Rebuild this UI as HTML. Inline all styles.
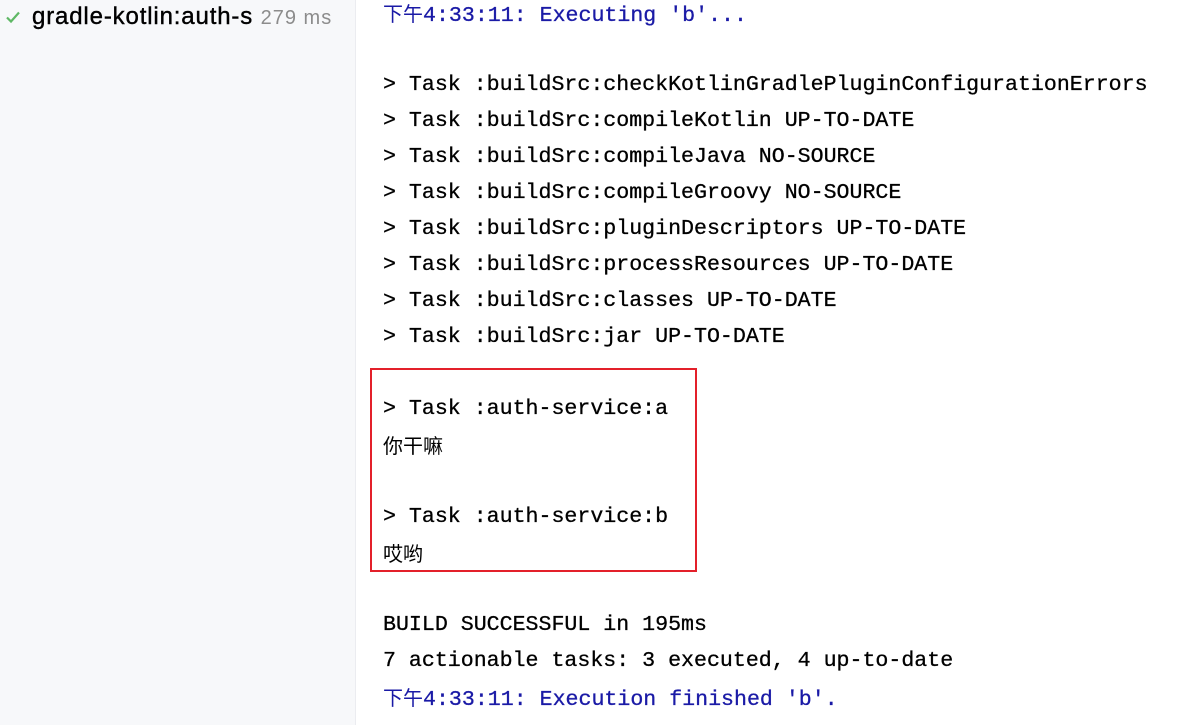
<!DOCTYPE html>
<html><head><meta charset="utf-8"><style>
body{margin:0;width:1198px;height:725px;overflow:hidden;background:#fff;position:relative}
.side{position:absolute;left:0;top:0;width:355px;height:725px;background:#f7f8fa;border-right:1px solid #ebecf0}
.item{position:absolute;left:32px;top:3px;font:24px "Liberation Sans",sans-serif;letter-spacing:0.85px;color:#000;white-space:nowrap;line-height:28px;-webkit-text-stroke:0.4px #000}
.item span{color:#8c8c8c;font-size:20px;letter-spacing:1px;-webkit-text-stroke:0}
.con{position:absolute;left:383px;top:-5px;font:21.6px "Liberation Mono",monospace;color:#000;-webkit-text-stroke:0.3px}
.con div{height:36px;line-height:36px;white-space:pre;overflow:visible}
.b{color:#1a1aa6}
.cjk{font-family:"Noto Sans CJK SC",sans-serif;font-size:20px;line-height:36px;-webkit-text-stroke:0}
.box{position:absolute;left:370px;top:368px;width:323px;height:200px;border:2px solid #e3202a}
</style></head><body>
<div class="side">
<svg style="position:absolute;left:5px;top:10px" width="16" height="14" viewBox="0 0 16 14"><path d="M2 7.5 L6 11.5 L14 2.5" fill="none" stroke="#5fb865" stroke-width="2.2"/></svg>
<div class="item">gradle-kotlin:auth-s <span>279 ms</span></div>
</div>
<div class="con">
<div class="b"><span class="cjk">下午</span>4:33:11: Executing 'b'...</div>
<div></div>
<div>&gt; Task :buildSrc:checkKotlinGradlePluginConfigurationErrors</div>
<div>&gt; Task :buildSrc:compileKotlin UP-TO-DATE</div>
<div>&gt; Task :buildSrc:compileJava NO-SOURCE</div>
<div>&gt; Task :buildSrc:compileGroovy NO-SOURCE</div>
<div>&gt; Task :buildSrc:pluginDescriptors UP-TO-DATE</div>
<div>&gt; Task :buildSrc:processResources UP-TO-DATE</div>
<div>&gt; Task :buildSrc:classes UP-TO-DATE</div>
<div>&gt; Task :buildSrc:jar UP-TO-DATE</div>
<div></div>
<div>&gt; Task :auth-service:a</div>
<div class="cjk">你干嘛</div>
<div></div>
<div>&gt; Task :auth-service:b</div>
<div class="cjk">哎哟</div>
<div></div>
<div>BUILD SUCCESSFUL in 195ms</div>
<div>7 actionable tasks: 3 executed, 4 up-to-date</div>
<div class="b"><span class="cjk">下午</span>4:33:11: Execution finished 'b'.</div>
</div>
<div class="box"></div>
</body></html>
